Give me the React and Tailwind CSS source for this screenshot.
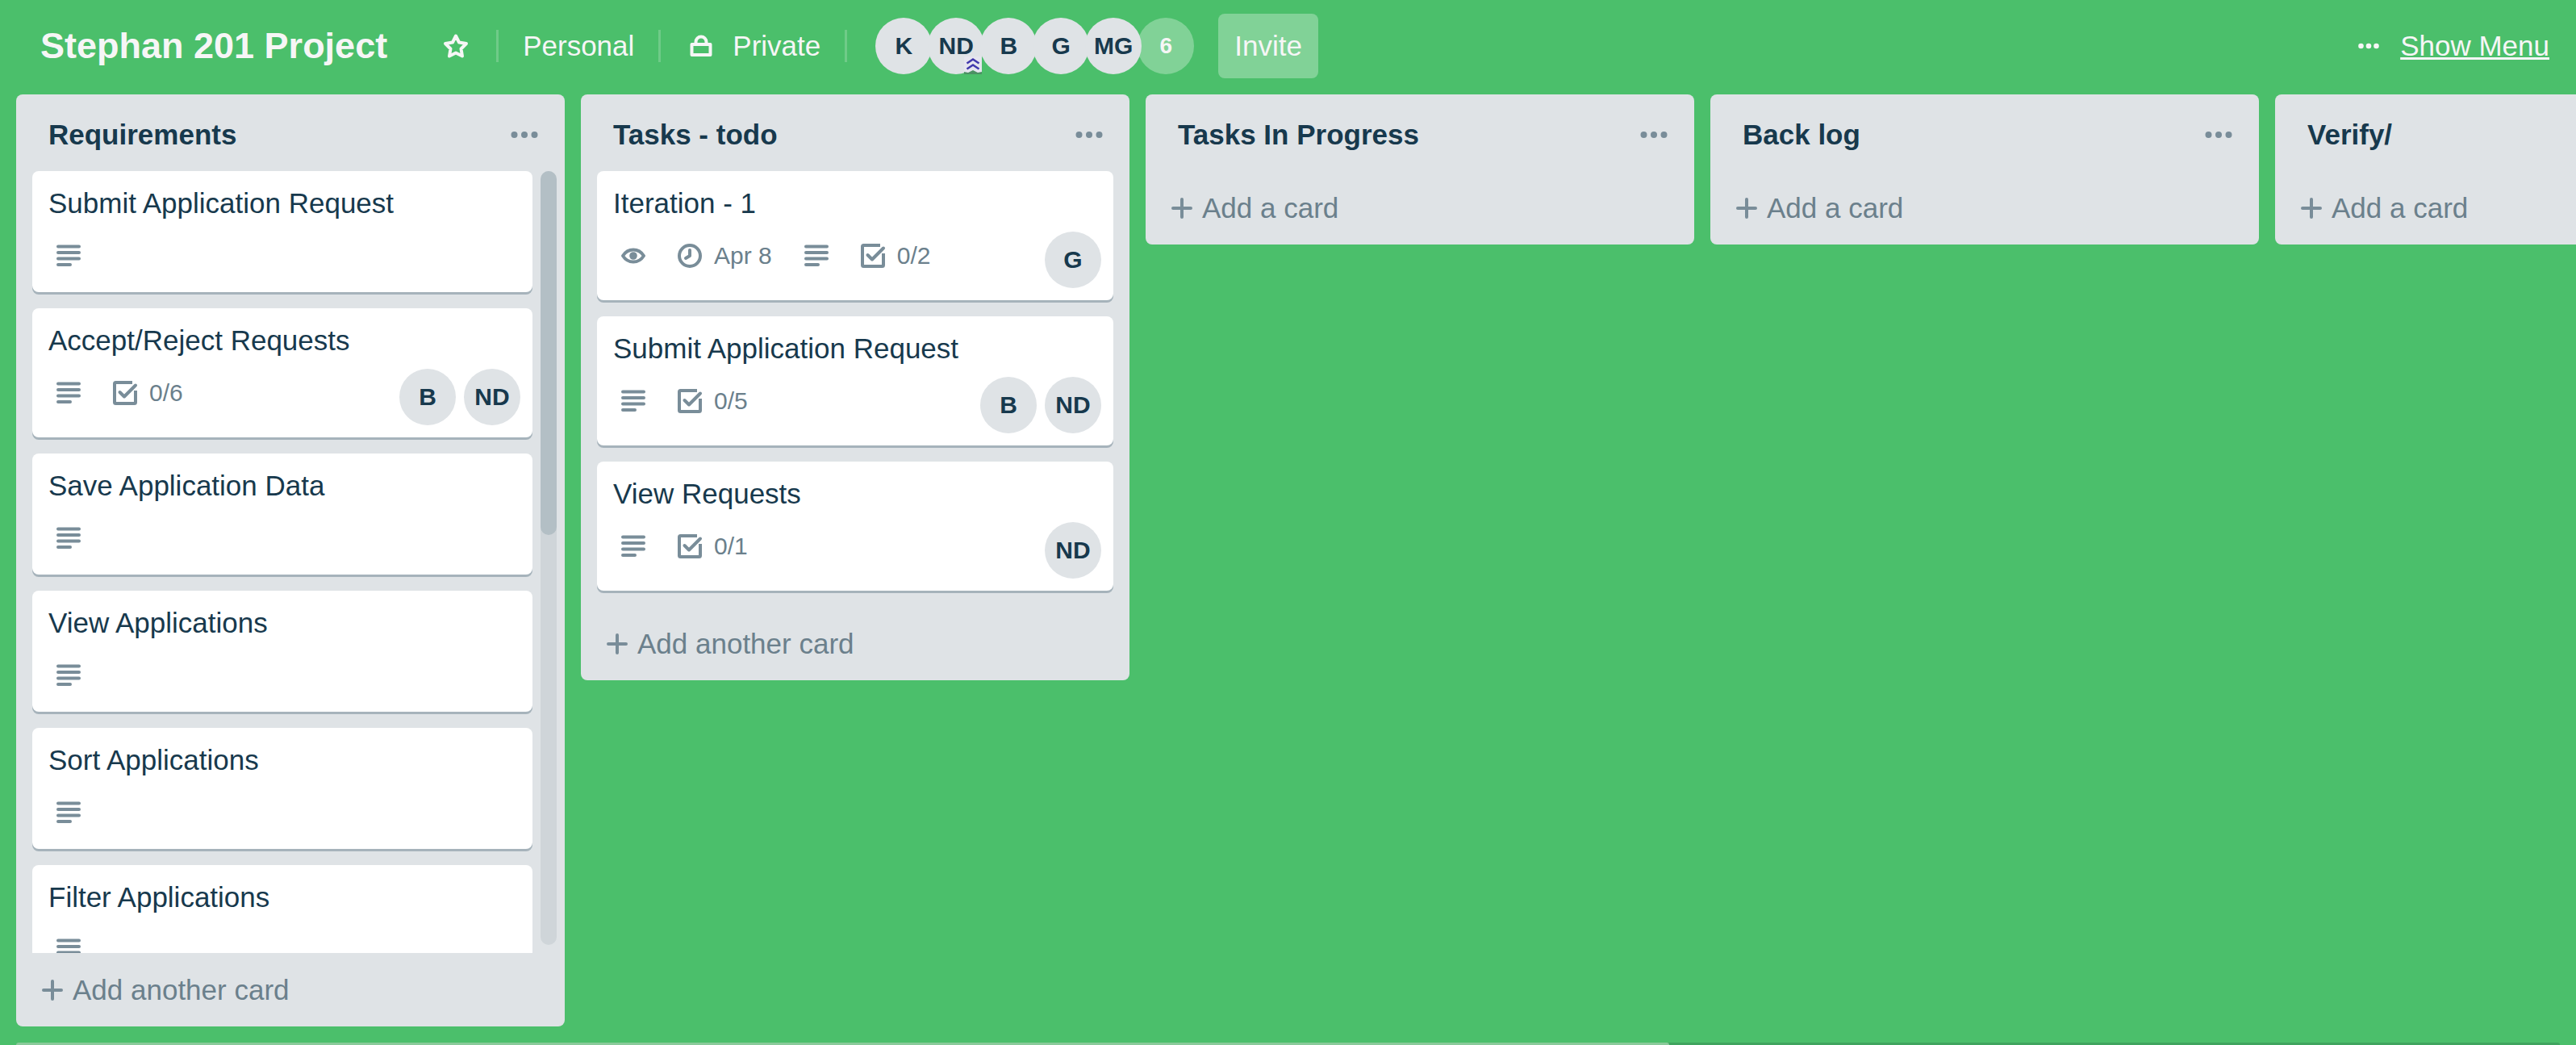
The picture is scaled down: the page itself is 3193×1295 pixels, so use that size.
const LISTS = [
  {
    title: "Requirements",
    scroll: true,
    footer: "Add another card",
    cards: [
      { title: "Submit Application Request", badges: [{ type: "desc" }] },
      { title: "Accept/Reject Requests", badges: [{ type: "desc" }, { type: "check", text: "0/6" }], members: ["B", "ND"] },
      { title: "Save Application Data", badges: [{ type: "desc" }] },
      { title: "View Applications", badges: [{ type: "desc" }] },
      { title: "Sort Applications", badges: [{ type: "desc" }] },
      { title: "Filter Applications", badges: [{ type: "desc" }] },
    ],
  },
  {
    title: "Tasks - todo",
    footer: "Add another card",
    cards: [
      {
        title: "Iteration - 1",
        badges: [{ type: "eye" }, { type: "clock", text: "Apr 8" }, { type: "desc" }, { type: "check", text: "0/2" }],
        members: ["G"],
      },
      { title: "Submit Application Request", badges: [{ type: "desc" }, { type: "check", text: "0/5" }], members: ["B", "ND"] },
      { title: "View Requests", badges: [{ type: "desc" }, { type: "check", text: "0/1" }], members: ["ND"] },
    ],
  },
  { title: "Tasks In Progress", footer: "Add a card", cards: [] },
  { title: "Back log", footer: "Add a card", cards: [] },
  { title: "Verify/", footer: "Add a card", cards: [] },
];

function Icon({ children }) {
  return (
    <svg viewBox="0 0 50 50" className="size-[50px] shrink-0" fill="none" stroke="currentColor" strokeWidth="4" strokeLinecap="round" strokeLinejoin="round" aria-hidden="true">
      {children}
    </svg>
  );
}

const BADGE_ICONS = {
  desc: <path d="M12 13.500h26M12 21h26M12 28.500h26M12 36h15" />,
  eye: (
    <>
      <path d="M12 25C15.500 19.500 20 17.500 25 17.500S34.500 19.500 38 25C34.500 30.500 30 32.500 25 32.500S15.500 30.500 12 25Z" />
      <circle cx="25" cy="25" r="4.800" fill="currentColor" stroke="none" />
    </>
  ),
  clock: (
    <>
      <circle cx="25" cy="25" r="13" />
      <path d="M25 18V25L20 28" />
    </>
  ),
  check: (
    <>
      <path d="M34 12H13.500a1.500 1.500 0 0 0-1.500 1.500v23a1.500 1.500 0 0 0 1.500 1.500h23a1.500 1.500 0 0 0 1.500-1.500V22" strokeLinecap="butt" />
      <path d="M18.500 24L24 29.500L38 15.500" />
    </>
  ),
};

function Avatar({ name }) {
  return (
    <span className="flex size-[70px] shrink-0 items-center justify-center rounded-full bg-[#dfe3e6] text-[30px] font-bold leading-[70px] text-[#17394d]">
      {name}
    </span>
  );
}

function Card({ title, badges, members = [] }) {
  return (
    <article className="shrink-0 rounded-[8px] bg-white px-[15px] py-[15px] shadow-[0_3px_0_#a6b3bb]">
      <h3 className="mb-[10px] px-[5px] leading-[50px]">{title}</h3>
      <div className="flex items-start justify-between">
        <div className="my-[5px] ml-[5px] flex gap-5">
          {badges.map((b) => (
            <span key={b.type} className="flex text-[#798d99]">
              <Icon>{BADGE_ICONS[b.type]}</Icon>
              {b.text && <span className="pl-[5px] pr-[10px] text-[30px] leading-[50px] text-[#6b808c]">{b.text}</span>}
            </span>
          ))}
        </div>
        {members.length > 0 && (
          <div className="flex gap-[10px]">
            {members.map((m) => (
              <Avatar key={m} name={m} />
            ))}
          </div>
        )}
      </div>
    </article>
  );
}

function List({ title, scroll, footer, cards }) {
  return (
    <section className="flex max-h-full w-[680px] shrink-0 flex-col rounded-[8px] bg-[#dfe3e6]">
      <header className="flex h-[95px] shrink-0 items-center justify-between pl-10 pr-[25px] pt-[5px]">
        <h2 className="font-bold leading-[50px]">{title}</h2>
        <button type="button" aria-label={title + " actions"} className="text-[#798d99]">
          <Icon>
            <g fill="currentColor" stroke="none">
              <circle cx="12.500" cy="25" r="4" />
              <circle cx="25" cy="25" r="4" />
              <circle cx="37.500" cy="25" r="4" />
            </g>
          </Icon>
        </button>
      </header>
      {cards.length > 0 && (
        <div className="flex min-h-0 pl-5 pr-[10px]">
          <div className={"flex min-w-0 grow flex-col gap-5 overflow-hidden pr-[10px] " + (scroll ? "" : "pb-5")}>
            {cards.map((c) => (
              <Card key={c.title} {...c} />
            ))}
          </div>
          {scroll && (
            <div className="mb-[10px] w-5 shrink-0 rounded-full bg-[#cfd5d9]">
              <div className="h-[47%] rounded-full bg-[#b3bfc5]" />
            </div>
          )}
        </div>
      )}
      <button type="button" className="flex h-[91px] shrink-0 items-center pl-5 text-[#6b808c]">
        <span className="text-[#798d99]">
          <Icon>
            <path d="M14 25h22M25 14v22" />
          </Icon>
        </span>
        <span className="leading-[50px]">{footer}</span>
      </button>
    </section>
  );
}

function Divider() {
  return <span className="h-10 w-[3px] shrink-0 bg-white/20" />;
}

function Header() {
  return (
    <header className="flex h-[117px] shrink-0 items-center pb-[3px] pl-[50px] pr-[33px] text-[#f6f6f6]">
      <h1 className="text-[45px] font-bold leading-[80px]">Stephan 201 Project</h1>
      <button type="button" aria-label="Star board" className="ml-[60px] mr-[25px]">
        <Icon>
          <path d="M25 12.500L29 20.500L38 22L31.500 28.500L33 37.500L25 33.500L17 37.500L18.500 28.500L12 22L21 20.500Z" />
        </Icon>
      </button>
      <Divider />
      <button type="button" className="px-[30px] leading-[80px]">Personal</button>
      <Divider />
      <button type="button" className="flex items-center pl-[25px] pr-[30px] leading-[80px]">
        <Icon>
          <path d="M13.500 23h23v13h-23zM18.500 23v-3a6.500 6.500 0 0 1 13 0v3" />
        </Icon>
        <span className="pl-[14px]">Private</span>
      </button>
      <Divider />
      <div className="ml-[35px] flex">
        {["K", "ND", "B", "G", "MG"].map((m) => (
          <span key={m} className="relative -mr-[5px]">
            <Avatar name={m} />
            {m === "ND" && (
              <svg viewBox="0 0 22 22" className="absolute bottom-0 right-[3px] z-10 size-[22px]" fill="none" aria-hidden="true">
                <rect width="22" height="21" rx="2" fill="#e5e5ee" />
                <path d="M0 19l5 1 6-3 6 3 5-1v3H0z" fill="#4b9163" />
                <path d="M3.500 8.500L11 3.500L18.500 8.500M3.500 15.500L11 10.500L18.500 15.500" stroke="#4038ac" strokeWidth="2.500" />
              </svg>
            )}
          </span>
        ))}
        <button type="button" className="size-[70px] rounded-full bg-white/30 text-[28px] font-bold leading-[70px]">6</button>
      </div>
      <button type="button" className="ml-[30px] h-20 rounded-[8px] bg-white/30 px-5 leading-[80px]">Invite</button>
      <a href="#menu" className="ml-auto flex items-center leading-[80px]">
        <Icon>
          <g fill="currentColor" stroke="none">
            <circle cx="15.500" cy="25" r="3.300" />
            <circle cx="25" cy="25" r="3.300" />
            <circle cx="34.500" cy="25" r="3.300" />
          </g>
        </Icon>
        <span className="pl-[14px] underline">Show Menu</span>
      </a>
    </header>
  );
}

export default function App() {
  return (
    <div className="flex h-screen flex-col overflow-hidden bg-[#4bbf6b] font-['Liberation_Sans',Arial,sans-serif] text-[35px] text-[#17394d]">
      <Header />
      <main className="flex min-h-0 grow items-start gap-5 overflow-hidden pb-5 pl-5">
        {LISTS.map((l) => (
          <List key={l.title} {...l} />
        ))}
      </main>
      <div className="mx-5 h-[3px] shrink-0 overflow-hidden rounded-t-[8px] bg-[#40a45f]">
        <div className="h-full w-[65%] rounded-tr-[8px] bg-[#8aca9a]" />
      </div>
    </div>
  );
}
